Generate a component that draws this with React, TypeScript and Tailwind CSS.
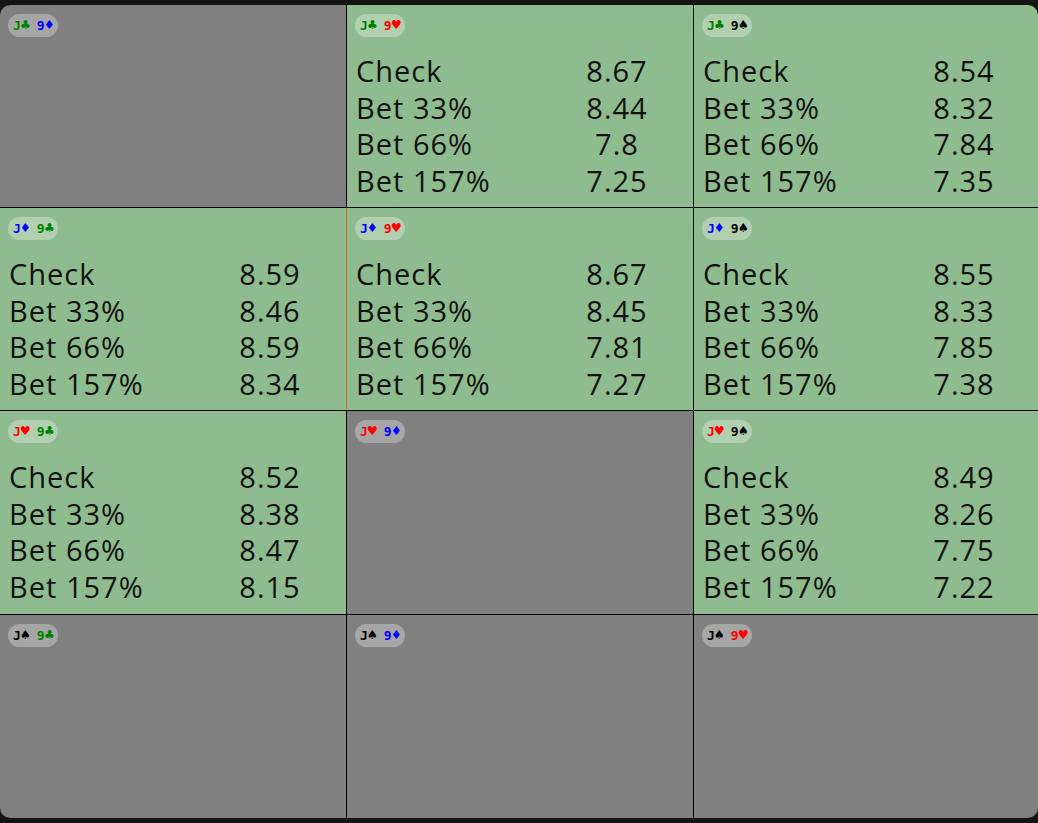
import React from "react";

type Suit = "c" | "d" | "h" | "s";
const suitChar: Record<Suit, string> = { c: "♣", d: "♦", h: "♥", s: "♠" };
const suitColor: Record<Suit, string> = {
  c: "text-[#008000]",
  d: "text-[#0000ff]",
  h: "text-[#ff0000]",
  s: "text-[#000000]",
};

type Cell = { a: Suit; b: Suit; vals?: string[]; mark?: boolean };

const cells: Cell[] = [
  { a: "c", b: "d" },
  { a: "c", b: "h", vals: ["8.67", "8.44", "7.8", "7.25"] },
  { a: "c", b: "s", vals: ["8.54", "8.32", "7.84", "7.35"] },
  { a: "d", b: "c", vals: ["8.59", "8.46", "8.59", "8.34"] },
  { a: "d", b: "h", vals: ["8.67", "8.45", "7.81", "7.27"], mark: true },
  { a: "d", b: "s", vals: ["8.55", "8.33", "7.85", "7.38"] },
  { a: "h", b: "c", vals: ["8.52", "8.38", "8.47", "8.15"] },
  { a: "h", b: "d" },
  { a: "h", b: "s", vals: ["8.49", "8.26", "7.75", "7.22"] },
  { a: "s", b: "c" },
  { a: "s", b: "d" },
  { a: "s", b: "h" },
];

const labels = ["Check", "Bet 33%", "Bet 66%", "Bet 157%"];

function Badge({ a, b }: { a: Suit; b: Suit }) {
  return (
    <div
      className="inline-flex items-center h-[23px] px-[4px] rounded-full bg-[rgba(255,255,255,0.3)] text-[13px] font-bold leading-none"
      style={{ fontFamily: '"DejaVu Sans Mono", "Liberation Mono", monospace' }}
    >
      <span className={`ml-[1px] ${suitColor[a]}`}>
        J<span className="text-[15px]">{suitChar[a]}</span>
      </span>
      <span className={`ml-[7px] ${suitColor[b]}`}>
        9<span className="text-[15px]">{suitChar[b]}</span>
      </span>
    </div>
  );
}

function CellView({ c }: { c: Cell }) {
  const green = !!c.vals;
  return (
    <div className={`relative ${green ? "bg-[#8fbc8f]" : "bg-[#808080]"} pt-[7px] pl-[8px]`}>
      {c.mark && <div className="absolute left-[-1px] top-0 h-full w-px bg-[#d9603b]" />}
      <Badge a={c.a} b={c.b} />
      {c.vals && (
        <div
          className="mt-[15px] text-[#111] tracking-[1px]"
          style={{ fontFamily: '"Open Sans", "Noto Sans", sans-serif' }}
        >
          {labels.map((l, i) => (
            <div key={l} className="flex h-[36.7px] items-center text-[29px] leading-none">
              <div className="w-[202px] pl-[1px]">{l}</div>
              <div className="w-[120px] text-center">{c.vals![i]}</div>
            </div>
          ))}
        </div>
      )}
    </div>
  );
}

export default function App() {
  return (
    <div className="w-[1038px] h-[823px] bg-[#141414] pt-[5px]">
      <div className="grid grid-cols-[346px_346px_1fr] grid-rows-[202px_202px_203px_1fr] gap-px bg-black h-[813px] rounded-[10px] overflow-hidden">
        {cells.map((c, i) => (
          <CellView key={i} c={c} />
        ))}
      </div>
    </div>
  );
}
